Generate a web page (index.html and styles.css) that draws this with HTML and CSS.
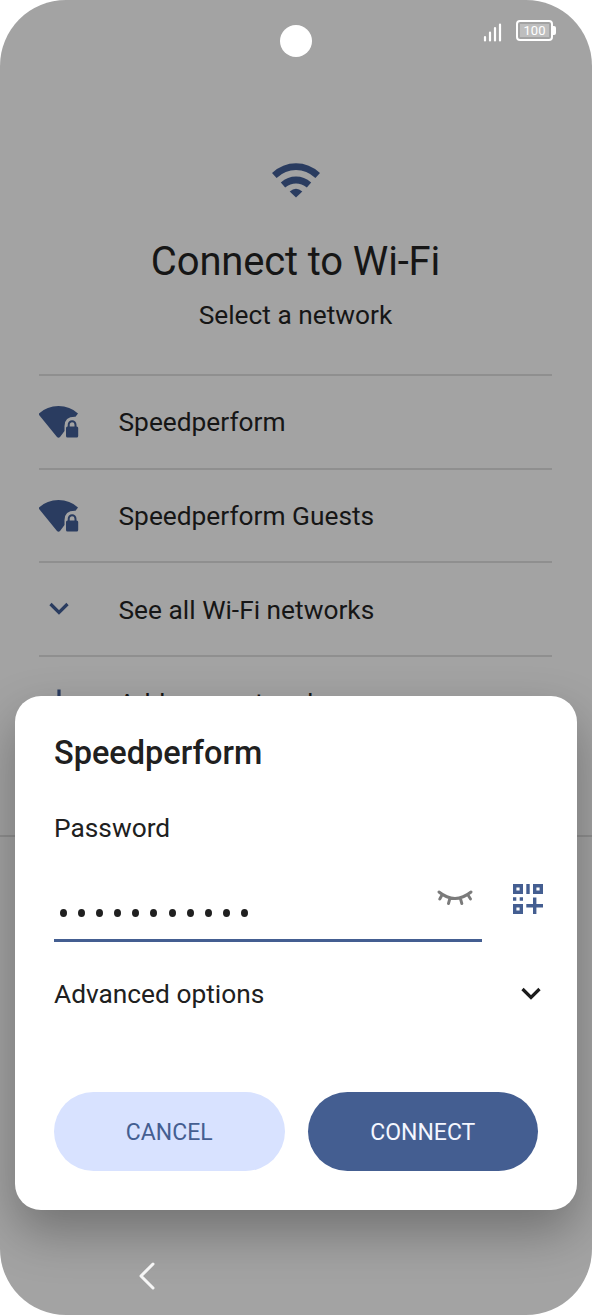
FILE: index.html
```
<!DOCTYPE html>
<html lang="en">
<head>
<meta charset="utf-8">
<title>Connect to Wi-Fi</title>
<link rel="stylesheet" href="styles.css">
</head>
<body>
<div class="phone">
  <span class="camera"></span>
  <header class="status">
    <svg class="signal" width="19" height="19" viewBox="0 0 19 19"><path d="M2 14v3.500M7 9.500v8M12 5v12.500M17 1.500v16" fill="none" stroke="#fff" stroke-width="2.200" stroke-linecap="round"/></svg>
    <span class="battery"><span class="level">100</span></span>
  </header>
  <main class="setup">
    <svg class="wifi" width="50" height="36" viewBox="0 0 50 36"><g fill="none" stroke="#2a3c60" stroke-width="6.800"><path d="M3.300 13.500Q13 4.700 25 4.700T46.700 13.500"/><path d="M12 23Q18 18 25 18T38 23"/></g><path d="M18.700 29.500Q25 24 31.300 29.500L25 35.500Z" fill="#2a3c60"/></svg>
    <h1>Connect to Wi-Fi</h1>
    <p class="subtitle">Select a network</p>
    <ul class="networks">
      <li><svg class="net" width="40" height="32" viewBox="0 0 40 32"><path d="M0 7.500Q8 0 19.500 0T39 7.500L36.500 10.800Q25 10.500 25.500 21V25L21 31Q19.500 32.500 18 31L.500 9.500Q-.300 8.500 0 7.500Z"/><rect x="27" y="20.500" width="12.200" height="11" rx="1.500"/><path d="M29.700 21.500v-2.800a3.400 3.400 0 0 1 6.800 0V21.500" class="shackle"/></svg><span>Speedperform</span></li>
      <li><svg class="net" width="40" height="32" viewBox="0 0 40 32"><path d="M0 7.500Q8 0 19.500 0T39 7.500L36.500 10.800Q25 10.500 25.500 21V25L21 31Q19.500 32.500 18 31L.500 9.500Q-.300 8.500 0 7.500Z"/><rect x="27" y="20.500" width="12.200" height="11" rx="1.500"/><path d="M29.700 21.500v-2.800a3.400 3.400 0 0 1 6.800 0V21.500" class="shackle"/></svg><span>Speedperform Guests</span></li>
      <li><svg class="net" width="40" height="32" viewBox="0 0 40 32"><path d="M11.500 10l8.500 8.500L28.500 10" class="line"/></svg><span>See all Wi-Fi networks</span></li>
      <li><svg class="net" width="40" height="32" viewBox="0 0 40 32"><path d="M20 2.500v24M9 15h22" class="line"/></svg><span>Add new network</span></li>
    </ul>
    <hr class="rule">
  </main>
  <section class="dialog">
    <h2>Speedperform</h2>
    <div class="label">Password</div>
    <div class="field">
      <div class="input"><span class="dots"><i></i><i></i><i></i><i></i><i></i><i></i><i></i><i></i><i></i><i></i><i></i></span>
        <svg class="eye" width="36" height="18" viewBox="0 0 36 18"><path d="M2 3Q18 16 34 3M5 6l-2.200 4M13 9l-1.500 5.500M23.300 9l1.500 5.500M31 6l2.500 4" fill="none" stroke="#7b7b7b" stroke-width="2.900" stroke-linecap="round"/></svg></div>
      <svg class="qr" width="30" height="30" viewBox="0 0 30 30"><g fill="none" stroke="#445e91" stroke-width="3.400"><path d="M1.700 1.700h6.600v6.600H1.700zM21.700 1.700h6.600v6.600h-6.600zM1.700 21.700h6.600v6.600H1.700zM15 0v10M21.700 13.500v16.500M13.300 21.700H30M0 15h3.300M6.700 15h3.300"/></g></svg>
    </div>
    <div class="advanced"><span>Advanced options</span><svg class="chevron" width="20" height="13" viewBox="0 0 20 13"><path d="M1.500 2l8.500 8.500L18.500 2" fill="none" stroke="#1b1b1b" stroke-width="3.200"/></svg></div>
    <div class="actions"><button class="cancel">CANCEL</button><button class="connect">CONNECT</button></div>
  </section>
  <svg class="back" width="20" height="30" viewBox="0 0 20 30"><path d="M16 3L4 15l12 12" fill="none" stroke="#f6f6f6" stroke-width="3" stroke-linecap="round" stroke-linejoin="round"/></svg>
</div>
</body>
</html>
```
FILE: styles.css
```
* { box-sizing: border-box; }
body { margin: 0; background: #fff; font-family: Roboto, "Liberation Sans", sans-serif; color: #161616; }
.phone { position: relative; width: 592px; height: 1315px; overflow: hidden; border-radius: 66px; background: #a3a3a3; }
.camera { position: absolute; left: 279.500px; top: 24.500px; width: 32px; height: 32px; border-radius: 50%; background: #fff; }
.status { display: flex; justify-content: flex-end; gap: 14px; height: 60px; padding: 20px 39px 0 0; }
.signal { margin-top: 3px; }
.battery { position: relative; width: 37px; height: 21px; padding: 2px; border: 2px solid #fff; border-radius: 4px; }
.battery::after { content: ""; position: absolute; right: -5px; top: 4px; width: 3px; height: 9px; border-radius: 0 2px 2px 0; background: #fff; }
.level { display: block; height: 13px; background: #bebebe; color: #fff; font-size: 13px; line-height: 14px; text-align: center; }
.setup { display: flex; flex-direction: column; align-items: stretch; padding: 102px 40px 0 39px; }
.wifi { display: block; align-self: center; }
h1 { margin: 40px 0 0; font-size: 40px; line-height: 48px; font-weight: 400; text-align: center; letter-spacing: -.15px; }
.subtitle { margin: 13px 0 0; font-size: 26.300px; line-height: 32px; text-align: center; }
.networks { list-style: none; margin: 43px 0 0; padding: 0; }
.networks li { display: flex; align-items: center; gap: 39.500px; height: 93.700px; padding-top: 1px; border-top: 2px solid #8f8f8f; font-size: 26.300px; }
.net { fill: #2a3c60; }
.shackle { fill: none; stroke: #2a3c60; stroke-width: 2; }
.line { fill: none; stroke: #2a3c60; stroke-width: 3.200; }
.rule { width: 592px; margin: 86px 0 0 -39px; border: 0; border-top: 2px solid #8f8f8f; }
.dialog { position: absolute; left: 15px; top: 696px; width: 562px; height: 514px; padding: 37px 39px 0; border-radius: 26px; background: #fff; color: #202020; box-shadow: 0 22px 50px rgba(0,0,0,.3); }
h2 { margin: 0; font-size: 32.500px; line-height: 40px; font-weight: 500; }
.label { margin-top: 39px; font-size: 26.300px; line-height: 32px; }
.field { display: flex; align-items: flex-start; gap: 31px; width: 490px; margin-top: 36px; }
.input { display: flex; justify-content: space-between; width: 428px; height: 62px; padding: 9px 9px 0 6px; border-bottom: 3px solid #445e91; }
.dots { display: flex; gap: 11.100px; padding-top: 20px; }
.dots i { width: 7px; height: 8px; border-radius: 50%; background: #202020; }
.qr { flex: none; margin-top: 4px; }
.advanced { display: flex; justify-content: space-between; align-items: center; width: 487px; height: 32px; margin-top: 36px; font-size: 26.300px; }
.chevron { margin-bottom: 2px; }
.actions { display: flex; gap: 23px; margin-top: 81.500px; }
button { width: 230.500px; height: 79px; padding: 2px 0 0; border: 0; border-radius: 40px; font: 400 23px Roboto, sans-serif; }
.cancel { background: #d8e2ff; color: #445e91; }
.connect { background: #445e91; color: #f4f6ff; }
.back { position: absolute; left: 137px; top: 1261px; }
```
